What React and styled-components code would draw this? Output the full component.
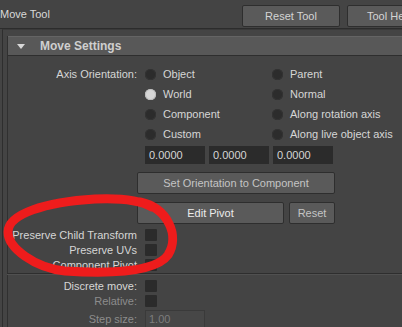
import React from "react";
import styled, { createGlobalStyle } from "styled-components";

const Global = createGlobalStyle`
  html, body { margin: 0; padding: 0; background: #444444; }
  * { box-sizing: border-box; }
`;

const Page = styled.div`
  position: relative;
  width: 402px;
  height: 327px;
  overflow: hidden;
  background: #444444;
  font-family: "Liberation Sans", Arial, sans-serif;
  font-size: 11px;
  color: #d6d6d6;
`;

const TopBar = styled.div`
  display: flex;
  align-items: center;
  height: 29px;
  padding-top: 3px;
  border-bottom: 1px solid #2c2c2c;
`;

const Title = styled.div`
  flex: none;
  width: 242px;
  font-size: 11px;
  color: #d8d8d8;
  margin-top: -3px;
`;

const TopButton = styled.div`
  flex: none;
  width: ${p => p.$w}px;
  height: 22px;
  margin-left: ${p => p.$ml || 0}px;
  display: flex;
  align-items: center;
  justify-content: ${p => (p.$left ? "flex-start" : "center")};
  padding-left: ${p => (p.$left ? 19 : 0)}px;
  background: #5a5a5a;
  border: 1px solid #2e2e2e;
  border-radius: 2px;
  color: #d4d4d4;
  white-space: nowrap;
`;

const Frame = styled.div`
  margin-left: 2px;
  border-left: 1px solid #2e2e2e;
  border-top: 1px solid #3a3a3a;
  padding: 6px 0 0 4px;
  height: 300px;
`;

const Section = styled.div`
  border-left: 1px solid #303030;
`;

const Header = styled.div`
  display: flex;
  align-items: center;
  height: 20px;
  background: #585858;
  border-top: 1px solid #646464;
  border-bottom: 1px solid #2e2e2e;
`;

const Arrow = styled.span`
  width: 0;
  height: 0;
  margin-left: 9px;
  margin-right: 15px;
  border-left: 4px solid transparent;
  border-right: 4px solid transparent;
  border-top: 5px solid #d8d8d8;
`;

const HeaderText = styled.span`
  font-weight: bold;
  font-size: 12px;
  color: #cfcfcf;
`;

const Body = styled.div`
  padding-top: 8px;
`;

const Row = styled.div`
  display: grid;
  grid-template-columns: 129px 1fr;
  column-gap: 8px;
  align-items: ${p => p.$top ? "start" : "center"};
  padding-top: ${p => p.$pt || 0}px;
  height: ${p => p.$h}px;
`;

const Label = styled.div`
  text-align: right;
  white-space: nowrap;
  color: ${p => (p.$dim ? "#8c8c8c" : "#d6d6d6")};
`;

const RadioGrid = styled.div`
  display: grid;
  grid-template-columns: 127px 1fr;
`;

const RadioItem = styled.div`
  display: flex;
  align-items: center;
  gap: 7px;
  white-space: nowrap;
`;

const Dot = styled.span`
  width: 11px;
  height: 11px;
  border-radius: 50%;
  background: ${p => (p.$on ? "#d6d6d6" : "#2c2c2c")};
  box-shadow: inset 0 0 0 1px ${p => (p.$on ? "#bdbdbd" : "#333")};
`;

const Fields = styled.div`
  display: flex;
  gap: 4px;
`;

const Field = styled.div`
  width: 60px;
  height: 18px;
  background: ${p => (p.$dim ? "#474747" : "#2b2b2b")};
  border: 1px solid ${p => (p.$dim ? "#3a3a3a" : "#2b2b2b")};
  color: ${p => (p.$dim ? "#7d7d7d" : "#d6d6d6")};
  padding-left: 3px;
  display: flex;
  align-items: center;
`;

const ButtonRow = styled.div`
  display: flex;
  gap: 5px;
  padding-left: 129px;
  padding-top: ${p => p.$pt || 0}px;
  height: ${p => p.$h}px;
  align-items: flex-start;
`;

const Button = styled.div`
  width: ${p => p.$w}px;
  height: 22px;
  display: flex;
  align-items: center;
  justify-content: center;
  background: #5a5a5a;
  border: 1px solid #2e2e2e;
  border-radius: 2px;
  color: ${p => (p.$bright ? "#ececec" : "#c4c4c4")};
  white-space: nowrap;
`;

const Check = styled.span`
  display: block;
  width: 12px;
  height: 12px;
  background: #2b2b2b;
  border-radius: 1px;
`;

const Separator = styled.div`
  height: 2px;
  border-top: 1px solid #2e2e2e;
  border-bottom: 1px solid #505050;
  margin: 1px 0 3px -1px;
`;

const Overlay = styled.svg`
  position: absolute;
  left: 0;
  top: 0;
  width: 402px;
  height: 327px;
  pointer-events: none;
`;

const radios = [
  ["Object", false, "Parent"],
  ["World", true, "Normal"],
  ["Component", false, "Along rotation axis"],
  ["Custom", false, "Along live object axis"],
];

export default function App() {
  return (
    <Page>
      <Global />
      <TopBar>
        <Title>Move Tool</Title>
        <TopButton $w={98}>Reset Tool</TopButton>
        <TopButton $w={100} $ml={7} $left>Tool Help</TopButton>
      </TopBar>
      <Frame>
        <Section>
          <Header>
            <Arrow />
            <HeaderText>Move Settings</HeaderText>
          </Header>
          <Body>
            {radios.map(([a, on, b], i) => (
              <Row key={a} $h={20}>
                <Label>{i === 0 ? "Axis Orientation:" : ""}</Label>
                <RadioGrid>
                  <RadioItem>
                    <Dot $on={on} />
                    {a}
                  </RadioItem>
                  <RadioItem>
                    <Dot />
                    {b}
                  </RadioItem>
                </RadioGrid>
              </Row>
            ))}
            <Row $h={25} $top $pt={2}>
              <Label />
              <Fields>
                <Field>0.0000</Field>
                <Field>0.0000</Field>
                <Field>0.0000</Field>
              </Fields>
            </Row>
            <ButtonRow $h={33} $pt={3}>
              <Button $w={198}>Set Orientation to Component</Button>
            </ButtonRow>
            <ButtonRow $h={25}>
              <Button $w={147} $bright>Edit Pivot</Button>
              <Button $w={46}>Reset</Button>
            </ButtonRow>
            <Row $h={15}>
              <Label>Preserve Child Transform</Label>
              <Check />
            </Row>
            <Row $h={15}>
              <Label>Preserve UVs</Label>
              <Check />
            </Row>
            <Row $h={15}>
              <Label>Component Pivot</Label>
              <Check />
            </Row>
            <Separator />
            <Row $h={15}>
              <Label>Discrete move:</Label>
              <Check />
            </Row>
            <Row $h={15}>
              <Label $dim>Relative:</Label>
              <Check />
            </Row>
            <Row $h={22}>
              <Label $dim>Step size:</Label>
              <Field $dim>1.00</Field>
            </Row>
          </Body>
        </Section>
      </Frame>
      <Overlay viewBox="0 0 402 327">
        <path
          d="M 140 202 C 168 208, 180 236, 168 255 C 156 272, 110 274, 65 271 C 35 268, 8 248, 8 232 C 8 214, 45 202, 95 199 C 118 198, 138 199, 152 207"
          fill="none"
          stroke="#ee1c1c"
          strokeWidth="9"
          strokeLinecap="round"
        />
      </Overlay>
    </Page>
  );
}
